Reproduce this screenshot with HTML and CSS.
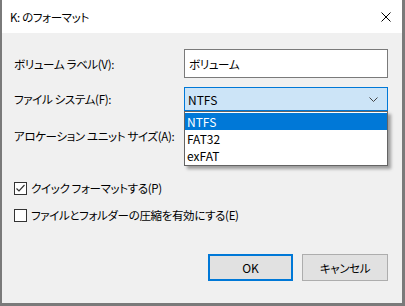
FILE: index.html
```html
<!DOCTYPE html>
<html lang="ja">
<head>
<meta charset="utf-8">
<link rel="stylesheet" href="styles.css">
</head>
<body>
<div class="dialog">
  <div class="titlebar">
    <span class="title">K: のフォーマット</span>
    <svg class="close" width="10" height="10" viewBox="0 0 10 10"><path d="M0.5 0.5 L9.5 9.5 M9.5 0.5 L0.5 9.5" stroke="#000" stroke-width="1" fill="none"/></svg>
  </div>
  <div class="content">
    <div class="form">
      <div class="label row1">ボリューム ラベル(V):</div>
      <div class="input row1">ボリューム</div>
      <div class="label row2">ファイル システム(F):</div>
      <div class="combo focused row2">
        <span class="latin">NTFS</span>
        <svg width="9" height="5" viewBox="0 0 9 5"><path d="M0.5 0.5 L4.5 4.5 L8.5 0.5" stroke="#444" stroke-width="1" fill="none"/></svg>
        <ul class="list">
          <li class="sel">NTFS</li>
          <li>FAT32</li>
          <li>exFAT</li>
        </ul>
      </div>
      <div class="label row3">アロケーション ユニット サイズ(A):</div>
      <div class="combo row3"></div>
    </div>
    <div class="checks">
      <label class="check">
        <span class="box"><svg width="11" height="11" viewBox="0 0 11 11"><path d="M1.5 5.5 L4 8 L9.5 2" stroke="#333" stroke-width="1.2" fill="none"/></svg></span>
        <span>クイック フォーマットする(P)</span>
      </label>
      <label class="check">
        <span class="box"></span>
        <span>ファイルとフォルダーの圧縮を有効にする(E)</span>
      </label>
    </div>
    <div class="buttons">
      <div class="btn default latin">OK</div>
      <div class="btn">キャンセル</div>
    </div>
  </div>
</div>
</body>
</html>
```

FILE: styles.css
```css
html, body {
  margin: 0;
  padding: 0;
}
body {
  width: 405px;
  height: 306px;
  background: #7a7a7a;
  font-family: "Noto Sans CJK JP", "Noto Sans", sans-serif;
  font-size: 11.5px;
  letter-spacing: -0.35px;
  color: #000;
  font-feature-settings: "palt";
  overflow: hidden;
}
.latin,
.list {
  font-size: 12px;
  letter-spacing: 0;
}
.dialog {
  margin-left: 2px;
  width: 400px;
  height: 303px;
  background: #f0f0f0;
  display: flex;
  flex-direction: column;
}
.titlebar {
  height: 33px;
  background: #fff;
  display: flex;
  align-items: center;
  justify-content: space-between;
  padding: 0 11px 0 8px;
  flex: none;
}
.content {
  flex: 1;
  padding: 16px 12px 22px 12px;
  display: flex;
  flex-direction: column;
}
.form {
  display: grid;
  grid-template-columns: 170px 204px;
  row-gap: 9px;
  align-items: center;
}
.label {
  line-height: 16px;
  white-space: nowrap;
}
.input {
  height: 29px;
  box-sizing: border-box;
  border: 1px solid #7a7a7a;
  background: #fff;
  padding: 0 4px;
  display: flex;
  align-items: center;
}
.combo {
  position: relative;
  height: 24px;
  box-sizing: border-box;
  border: 1px solid #adadad;
  background: #e5e5e5;
  display: flex;
  align-items: center;
  justify-content: space-between;
  padding: 0 9px 0 3px;
}
.combo.focused {
  border-color: #0078d7;
  background: #cce4f7;
}
.row3 {
  margin-top: 4px;
}
.list {
  position: absolute;
  left: -1px;
  top: 23px;
  width: 204px;
  margin: 0;
  padding: 1px 0;
  list-style: none;
  background: #fff;
  border: 1px solid #646464;
  box-sizing: border-box;
  box-shadow: 3px 3px 3px rgba(0, 0, 0, 0.35);
  z-index: 2;
}
.list li {
  height: 17px;
  line-height: 17px;
  padding-left: 2px;
}
.list li.sel {
  background: #0078d7;
  color: #fff;
}
.checks {
  margin-top: 33px;
  display: flex;
  flex-direction: column;
  gap: 13px;
}
.check {
  display: flex;
  align-items: center;
  gap: 4px;
  height: 14px;
}
.box {
  width: 13px;
  height: 13px;
  box-sizing: border-box;
  border: 1px solid #333;
  background: #fff;
  display: flex;
  align-items: center;
  justify-content: center;
}
.buttons {
  margin-top: auto;
  display: flex;
  justify-content: flex-end;
  gap: 9px;
  padding-right: 2px;
}
.btn {
  width: 86px;
  height: 27px;
  box-sizing: border-box;
  border: 1px solid #adadad;
  background: #e1e1e1;
  display: flex;
  align-items: center;
  justify-content: center;
}
.btn.default {
  border: 2px solid #0078d7;
  width: 85px;
}
```
